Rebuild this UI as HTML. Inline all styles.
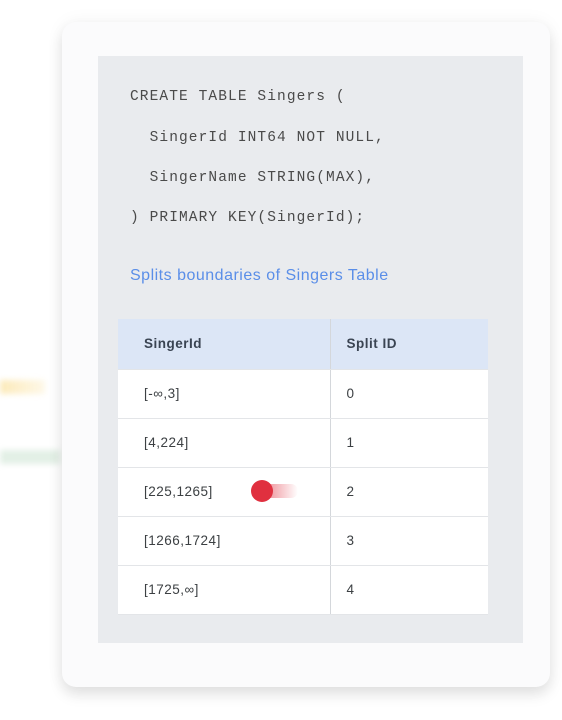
<!DOCTYPE html>
<html><head><style>
html,body{margin:0;padding:0;width:562px;height:720px;background:#fff;overflow:hidden;position:relative;font-family:"Liberation Sans",sans-serif}
.card{position:absolute;left:62px;top:22px;width:488px;height:665px;background:#fbfbfc;border-radius:14px;box-shadow:0 8px 14px rgba(0,0,0,.10),0 0 18px rgba(0,0,0,.05)}
.panel{position:absolute;left:98px;top:56px;width:425px;height:587px;background:#e9ebee}
.code{position:absolute;left:130px;font-family:"Liberation Mono",monospace;font-size:14.5px;letter-spacing:1.1px;color:#4a4a4a;white-space:pre;filter:blur(.3px)}
.link{position:absolute;left:130px;top:267px;font-size:16px;color:#5a8ee8;letter-spacing:.5px}
table{position:absolute;left:118px;top:319px;width:370px;border-collapse:collapse;background:#fff;font-size:13.5px;letter-spacing:.5px;color:#3c4043}
td{height:49px;padding:0 0 0 16px;border-bottom:1.5px solid #e3e5e8;box-sizing:border-box}
td:first-child{width:212px;padding-left:26px;border-right:1.5px solid #d4d7db}
tr.h td{background:#dce6f6;font-weight:bold;color:#3a4452;height:50px}
.dot{position:absolute;left:251px;top:480px;width:22px;height:22px;border-radius:50%;background:#e0303f}
.trail{position:absolute;left:262px;top:484px;width:36px;height:14px;border-radius:7px;background:linear-gradient(90deg,rgba(224,48,63,.6),rgba(224,48,63,0))}
.y{position:absolute;left:0;top:380px;width:45px;height:14px;background:linear-gradient(90deg,rgba(250,220,140,.6),rgba(250,220,140,.2));filter:blur(3px)}
.g{position:absolute;left:0;top:450px;width:60px;height:14px;background:rgba(200,225,205,.5);filter:blur(3px)}
</style></head><body>
<div class="y"></div><div class="g"></div>
<div class="card"></div>
<div class="panel"></div>
<div class="code" style="top:89px">CREATE TABLE Singers (</div>
<div class="code" style="top:130px">  SingerId INT64 NOT NULL,</div>
<div class="code" style="top:170px">  SingerName STRING(MAX),</div>
<div class="code" style="top:210px">) PRIMARY KEY(SingerId);</div>
<div class="link">Splits boundaries of Singers Table</div>
<table>
<tr class="h"><td>SingerId</td><td>Split ID</td></tr>
<tr><td>[-∞,3]</td><td>0</td></tr>
<tr><td>[4,224]</td><td>1</td></tr>
<tr><td>[225,1265]</td><td>2</td></tr>
<tr><td>[1266,1724]</td><td>3</td></tr>
<tr><td>[1725,∞]</td><td>4</td></tr>
</table>
<div class="trail"></div><div class="dot"></div>
</body></html>
